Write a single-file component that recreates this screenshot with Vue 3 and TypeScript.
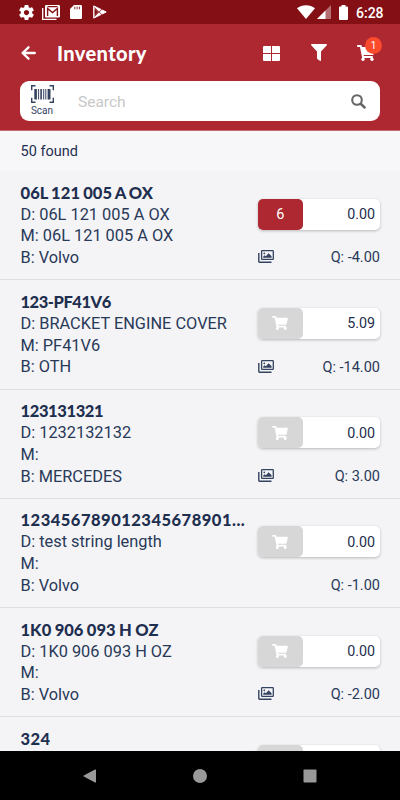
<script setup lang="ts">
interface Part {
  title: string
  fit: string
  details: string[]
  inCart?: number
  price: string
  quantity?: string
  hasImage: boolean
}

const parts: Part[] = [
  { title: '06L 121 005 A OX', fit: 'spaced', details: ['D: 06L 121 005 A OX', 'M: 06L 121 005 A OX', 'B: Volvo'], inCart: 6, price: '0.00', quantity: '-4.00', hasImage: true },
  { title: '123-PF41V6', fit: 'code', details: ['D: BRACKET ENGINE COVER', 'M: PF41V6', 'B: OTH'], price: '5.09', quantity: '-14.00', hasImage: true },
  { title: '123131321', fit: 'ones', details: ['D: 1232132132', 'M:', 'B: MERCEDES'], price: '0.00', quantity: '3.00', hasImage: true },
  { title: '123456789012345678901...', fit: 'long', details: ['D: test string length', 'M:', 'B: Volvo'], price: '0.00', quantity: '-1.00', hasImage: false },
  { title: '1K0 906 093 H OZ', fit: 'mixed', details: ['D: 1K0 906 093 H OZ', 'M:', 'B: Volvo'], price: '0.00', quantity: '-2.00', hasImage: true },
  { title: '324', fit: 'short', details: [], price: '', hasImage: false },
]
</script>

<template>
  <div class="screen">
    <div class="status">
      <div class="status-left">
        <svg class="s-gear" viewBox="2 2 20 20"><path fill="#fff" d="M19.43 12.98c.04-.32.07-.64.07-.98s-.03-.66-.07-.98l2.11-1.65c.19-.15.24-.42.12-.64l-2-3.46c-.12-.22-.39-.3-.61-.22l-2.49 1c-.52-.4-1.08-.73-1.69-.98l-.38-2.65C14.46 2.18 14.25 2 14 2h-4c-.25 0-.46.18-.49.42l-.38 2.65c-.61.25-1.17.59-1.69.98l-2.49-1c-.23-.09-.49 0-.61.22l-2 3.46c-.13.22-.07.49.12.64l2.11 1.65c-.04.32-.07.65-.07.98s.03.66.07.98l-2.11 1.65c-.19.15-.24.42-.12.64l2 3.46c.12.22.39.3.61.22l2.49-1c.52.4 1.08.73 1.69.98l.38 2.65c.03.24.24.42.49.42h4c.25 0 .46-.18.49-.42l.38-2.65c.61-.25 1.17-.59 1.69-.98l2.49 1c.23.09.49 0 .61-.22l2-3.46c.12-.22.07-.49-.12-.64l-2.11-1.65zM12 15.5c-1.93 0-3.5-1.57-3.5-3.5s1.57-3.5 3.5-3.5 3.5 1.57 3.5 3.5-1.57 3.5-3.5 3.5z"/></svg>
        <svg class="s-mail" viewBox="0 0 18 15"><path fill="none" stroke="#fff" stroke-width="1.3" d="M.7 3v11.300H14.500"/><rect x="3" y="0" width="15" height="12.500" rx="1.200" fill="#fff"/><path fill="none" stroke="#841015" stroke-width="1.400" d="M5.600 11V3.500l4.900 4.100 4.900-4.100V11M5.600 1.600h9.800"/></svg>
        <svg class="s-card" viewBox="0 0 12 14"><path fill="#fff" d="M4 0h6.800Q12 0 12 1.200v11.600q0 1.200-1.200 1.200H1.200Q0 14 0 12.800V4z"/><path stroke="#841015" stroke-width=".9" d="M4.800 1.600v2.700M7.100 1.600v2.700M9.400 1.600v2.700"/></svg>
        <svg class="s-play" viewBox="0 0 14 14"><path fill="#fff" stroke="#fff" stroke-linejoin="round" d="M.7.9 13.200 7 .7 13.100z"/><path fill="#841015" d="M1.500 3.300 5.300 7l-3.800 3.900z"/><path fill="none" stroke="#841015" stroke-width=".8" d="m1.500 2.500 8 7.800M1.500 11.500l8-7.800"/></svg>
      </div>
      <div class="status-right">
        <svg class="s-wifi" viewBox="0 0 18 14"><path fill="#fff" d="M0 3.300C5-.9 13-.9 18 3.300L9 14z"/></svg>
        <svg class="s-signal" viewBox="0 0 14 14"><path fill="#fff" opacity=".4" d="M14 0v14H0z"/><path fill="#fff" d="M8.500 5.500V14H0z"/></svg>
        <svg class="s-battery" viewBox="0 0 9 15"><path fill="#fff" d="M2.500 0h4v1.600H8q1 0 1 1V14q0 1-1 1H1q-1 0-1-1V2.600q0-1 1-1h1.500z"/></svg>
        <span class="time">6:28</span>
      </div>
    </div>

    <header class="header">
      <div class="bar">
        <svg class="back" viewBox="0 0 15 14"><path fill="none" stroke="#fff" stroke-width="2.300" stroke-linecap="round" stroke-linejoin="round" d="M7.500 1.300 1.600 7l5.900 5.700M1.800 7h12"/></svg>
        <h1>Inventory</h1>
        <svg class="grid" viewBox="0 0 17 15"><path fill="#fff" d="M1 0h7v7H0V1q0-1 1-1zM9 0h7q1 0 1 1v6H9zM0 8h8v7H1q-1 0-1-1zM9 8h8v6q0 1-1 1H9z"/></svg>
        <svg class="funnel" viewBox="0 0 512 512" preserveAspectRatio="none"><path fill="#fff" d="M488 0H24C3 0-8 26 7 41l185 185v206c0 8 4 15 10 20l80 56c16 11 38 0 38-20V226L505 41c15-15 4-41-17-41z"/></svg>
        <div class="cart-wrap">
          <svg class="cart" viewBox="0 0 576 512"><path fill="#fff" d="M528.120 301.319l47.273-208C578.806 78.301 567.391 64 551.990 64H159.208l-9.166-44.810C147.758 8.021 137.930 0 126.529 0H24C10.745 0 0 10.745 0 24v16c0 13.255 10.745 24 24 24h69.883l70.248 343.435C147.325 417.100 136 435.222 136 456c0 30.928 25.072 56 56 56s56-25.072 56-56c0-15.674-6.447-29.835-16.824-40h209.647C430.447 426.165 424 440.326 424 456c0 30.928 25.072 56 56 56s56-25.072 56-56c0-22.172-12.888-41.332-31.579-50.405l5.517-24.276c3.413-15.018-8.002-29.319-23.403-29.319H218.117l-6.545-32h293.145c11.206 0 20.920-7.754 23.403-18.681z"/></svg>
          <span class="badge">1</span>
        </div>
      </div>
      <div class="search">
        <div class="scan">
          <svg viewBox="0 0 23 18"><path fill="none" stroke="#34435f" stroke-width="1.400" d="M4.500.7H.7v4.500M18.500.7h3.800v4.500M.7 12.800v4.500h3.800M22.300 12.800v4.500h-3.800"/><path fill="#34435f" d="M3.300 4h2.600v10.500H3.300zM7.100 4h1v10.500h-1zM9.300 4h1.600v10.500H9.300zM12.200 4h1v10.500h-1zM14.300 4h1v10.500h-1zM16.600 4h2.900v10.500h-2.900z"/></svg>
          <span>Scan</span>
        </div>
        <span class="placeholder">Search</span>
        <svg class="magnifier" viewBox="0 0 15 15"><circle cx="6" cy="6" r="4.800" fill="none" stroke="#666" stroke-width="2.100"/><path stroke="#666" stroke-width="2.500" stroke-linecap="round" d="m10 10 3.600 3.500"/></svg>
      </div>
    </header>

    <div class="found">50 found</div>

    <main class="list">
      <article v-for="part in parts" :key="part.title" class="row">
        <div class="info">
          <h2 :class="part.fit">{{ part.title }}</h2>
          <p v-for="line in part.details" :key="line">{{ line }}</p>
        </div>
        <div class="side">
          <div class="control">
            <div class="add" :class="{ active: part.inCart }">
              <template v-if="part.inCart">{{ part.inCart }}</template>
              <svg v-else viewBox="0 0 576 512"><path fill="#fff" d="M528.120 301.319l47.273-208C578.806 78.301 567.391 64 551.990 64H159.208l-9.166-44.810C147.758 8.021 137.930 0 126.529 0H24C10.745 0 0 10.745 0 24v16c0 13.255 10.745 24 24 24h69.883l70.248 343.435C147.325 417.100 136 435.222 136 456c0 30.928 25.072 56 56 56s56-25.072 56-56c0-15.674-6.447-29.835-16.824-40h209.647C430.447 426.165 424 440.326 424 456c0 30.928 25.072 56 56 56s56-25.072 56-56c0-22.172-12.888-41.332-31.579-50.405l5.517-24.276c3.413-15.018-8.002-29.319-23.403-29.319H218.117l-6.545-32h293.145c11.206 0 20.920-7.754 23.403-18.681z"/></svg>
            </div>
            <span class="price">{{ part.price }}</span>
          </div>
          <div v-if="part.quantity" class="stock">
            <svg v-if="part.hasImage" viewBox="0 0 16 13"><path fill="none" stroke="#34435f" stroke-width="1.400" d="M.8 3v8.500q0 .7.700.7H13.500"/><rect x="3.600" y=".7" width="11.700" height="8.600" rx=".6" fill="none" stroke="#34435f" stroke-width="1.300"/><circle cx="6.300" cy="3.300" r=".9" fill="#34435f"/><path fill="#34435f" d="M5.200 7.800V6.500l1.500-1.200 1.200.9 2.700-3 3 3v1.600z"/></svg>
            <span class="quantity">Q: {{ part.quantity }}</span>
          </div>
        </div>
      </article>
    </main>

    <nav class="nav">
      <svg viewBox="0 0 14 14"><path fill="#999" d="M12 .6q1-.5 1 .5v11.800q0 1-1 .5L.8 7.500q-.8-.5 0-1z"/></svg>
      <svg viewBox="0 0 14 14"><circle cx="7" cy="7" r="7" fill="#999"/></svg>
      <svg viewBox="0 0 14 14"><rect x=".5" y=".5" width="13" height="13" rx=".8" fill="#999"/></svg>
    </nav>
  </div>
</template>

<style>
body { margin: 0; overflow: hidden; }
</style>

<style scoped>
* { box-sizing: border-box; }
svg { display: block; flex: none; }
.screen {
  width: 400px;
  height: 800px;
  display: flex;
  flex-direction: column;
  overflow: hidden;
  background: #f4f4f7;
  color: #1f2f4f;
  font-family: Roboto, "Liberation Sans", sans-serif;
}
.status {
  flex: none;
  height: 24px;
  background: #841015;
  display: flex;
  justify-content: space-between;
  padding: 0 16px 0 19px;
}
.status-left, .status-right { display: flex; align-items: center; }
.s-gear { width: 15px; height: 15px; margin-right: 8px; }
.s-mail { width: 18px; height: 15px; margin-right: 10px; }
.s-card { width: 12px; height: 14px; margin-right: 11px; }
.s-play { width: 14px; height: 14px; }
.s-wifi { width: 18px; height: 14px; margin-right: 2px; }
.s-signal { width: 14px; height: 14px; margin-right: 8px; }
.s-battery { width: 9px; height: 15px; margin-right: 8px; }
.time { color: #fff; font-size: 14px; font-weight: 500; line-height: 24px; width: 28px; white-space: nowrap; padding-top: 1px; }
.header { flex: none; height: 107px; background: #ad2830; border-bottom: 1px solid #c66b70; }
.bar { height: 57px; display: flex; align-items: center; padding: 0 25px 0 21px; }
.back { width: 15px; height: 14px; }
h1 {
  margin: 0 auto 0 21px;
  color: #fff;
  font: 900 20px/24px Lato, sans-serif;
  letter-spacing: .38px;
}
.grid { width: 17px; height: 15px; margin-right: 31px; margin-top: 1px; }
.funnel { width: 16px; height: 17px; margin-right: 30px; }
.cart-wrap { position: relative; width: 18px; height: 16px; }
.cart { width: 18px; height: 16px; }
.badge {
  position: absolute;
  left: 8px;
  top: -8px;
  width: 17px;
  height: 17px;
  border-radius: 50%;
  background: #fb4a2c;
  color: #fff;
  font-size: 10px;
  line-height: 17px;
  text-align: center;
}
.search {
  margin: 0 20px;
  height: 40px;
  border-radius: 9px;
  background: #fff;
  display: flex;
  align-items: center;
  padding: 0 14px 0 10.500px;
}
.scan { width: 23px; display: flex; flex-direction: column; align-items: center; }
.scan svg { width: 23px; height: 18px; }
.scan span { font-size: 10px; line-height: 12px; margin-top: 2px; color: #34435f; }
.placeholder { margin: 2px auto 0 24.500px; font-size: 15.500px; color: #c8c8c8; }
.magnifier { width: 15px; height: 15px; }
.found {
  flex: none;
  height: 40px;
  padding-left: 20.500px;
  background: #f7f7fa;
  font-size: 14.500px;
  line-height: 42px;
}
.list { flex: 1; min-height: 0; overflow: hidden; }
.row {
  height: 109.250px;
  padding: 11px 20px 0 20.500px;
  border-bottom: 1px solid #dedfe3;
  display: flex;
  justify-content: space-between;
}
.info { width: 228px; white-space: nowrap; }
h2 { margin: 0; padding-top: .7px; font: 900 16.500px/21px Lato, sans-serif; }
.spaced { letter-spacing: .08px; word-spacing: -.9px; }
.mixed { letter-spacing: .05px; word-spacing: -.6px; }
.code { letter-spacing: -.45px; }
.ones { letter-spacing: -.38px; }
.long { letter-spacing: .5px; }
.short { letter-spacing: .4px; }
.info p { margin: 0; font-size: 16.350px; line-height: 21.700px; color: #293958; }
.side { width: 122.500px; padding-top: 16.500px; }
.control {
  height: 31px;
  border-radius: 5px;
  background: #fff;
  box-shadow: 0 1px 3px rgba(0, 0, 0, .25);
  display: flex;
  align-items: center;
  justify-content: space-between;
}
.add {
  width: 45.500px;
  height: 100%;
  border-radius: 5px;
  background: #d7d7d7;
  color: #fff;
  display: flex;
  align-items: center;
  justify-content: center;
  font-size: 14.500px;
}
.add.active { background: #ad2830; }
.add svg { width: 16px; height: 14px; }
.price { padding-right: 5px; font-size: 14.300px; }
.stock { margin-top: 17.300px; height: 22px; display: flex; align-items: center; }
.stock svg { width: 16px; height: 13px; margin-bottom: 2px; }
.quantity { margin-left: auto; font-size: 14.500px; color: #293958; }
.nav {
  flex: none;
  height: 49px;
  background: #000;
  display: flex;
  align-items: center;
  justify-content: center;
  gap: 96px;
}
.nav svg { width: 14px; height: 14px; }
</style>
